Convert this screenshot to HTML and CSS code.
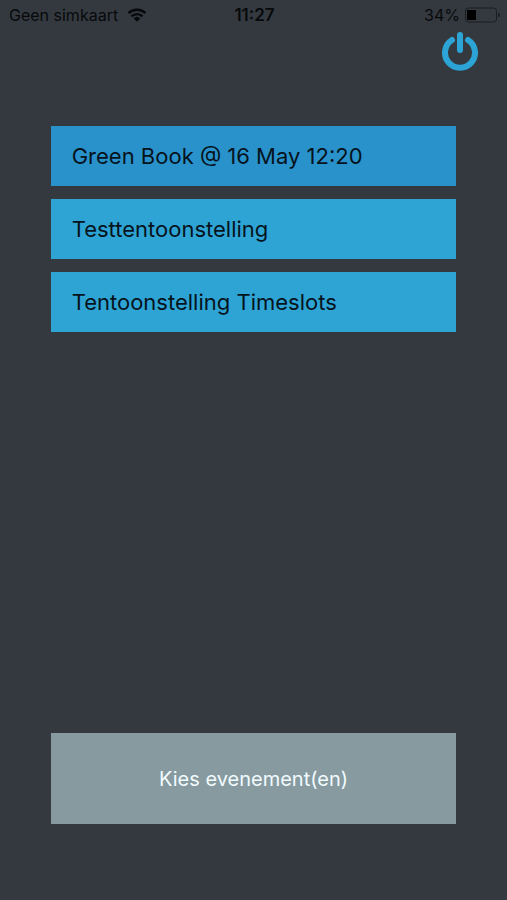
FILE: index.html
```
<!DOCTYPE html>
<html lang="nl">

<head>
  <meta charset="UTF-8">
  <meta name="viewport" content="width=device-width, initial-scale=1.0">
  <title>Kies evenement</title>
  <link rel="stylesheet" href="styles.css">
</head>

<body>
  <div class="screen">
    <div class="status_bar">
      <div class="carrier">
        <span>Geen simkaart</span>
        <svg class="wifi" viewBox="0 0 20 14" aria-hidden="true">
          <path d="M1.5 5.2a12.3 12.3 0 0 1 17 0M4.5 8.3a8 8 0 0 1 11 0" fill="none" stroke="currentColor" stroke-width="2.4" />
          <path d="M6.7 10.4a4.8 4.8 0 0 1 6.6 0L10 13.8z" fill="currentColor" />
        </svg>
      </div>
      <div class="time">11:27</div>
      <div class="battery">
        <span>34%</span>
        <svg class="battery_icon" viewBox="0 0 36 16" aria-hidden="true">
          <rect x="1.5" y="1" width="31" height="14" rx="3" fill="none" stroke="#1a1e21" />
          <rect x="3" y="3" width="9" height="10" fill="#000" />
          <path d="M34 5.5v5q2-1 2-2.500t-2-2.500z" fill="#1a1e21" />
        </svg>
      </div>
    </div>

    <header class="header">
      <button class="power" type="button" aria-label="Uitloggen">
        <svg viewBox="0 0 36 42" aria-hidden="true">
          <path d="M10 10a15 15 0 1 0 16 0M18 5v15" />
        </svg>
      </button>
    </header>

    <main class="events">
      <button class="event selected" type="button" aria-pressed="true">Green Book @ 16 May 12:20</button>
      <button class="event" type="button" aria-pressed="false">Testtentoonstelling</button>
      <button class="event" type="button" aria-pressed="false">Tentoonstelling Timeslots</button>
    </main>

    <footer class="footer">
      <button class="choose" type="button">Kies evenement(en)</button>
    </footer>
  </div>
  <script>
    const events = document.querySelectorAll(".event");

    events.forEach(el => {
      el.addEventListener("click", () => {
        const selected = el.classList.toggle("selected");
        el.setAttribute("aria-pressed", selected);
      })
    })
  </script>
</body>

</html>
```
FILE: styles.css
```
* {
  margin: 0;
  padding: 0;
  box-sizing: border-box;
}

body {
  background: #34393f;
  font-family: Inter, "Liberation Sans", sans-serif;
}

button {
  border: none;
  font-family: inherit;
  cursor: pointer;
}

svg {
  display: block;
}

.screen {
  display: flex;
  flex-direction: column;
  min-height: 100vh;
}

.status_bar {
  display: grid;
  grid-template-columns: 1fr auto 1fr;
  align-items: center;
  height: 30px;
  padding: 0 7px 0 9px;
  color: #07090b;
  font-size: 16px;
}

.carrier,
.battery {
  display: flex;
  align-items: center;
}

.carrier {
  gap: 9px;
}

.wifi {
  width: 20px;
  height: 14px;
}

.time {
  font-size: 17px;
  font-weight: 600;
}

.battery {
  justify-content: flex-end;
  gap: 4px;
}

.battery_icon {
  width: 36px;
  height: 16px;
}

.header {
  display: flex;
  justify-content: flex-end;
  padding: 0 29px;
}

.power {
  width: 36px;
  height: 42px;
  background: none;
}

.power path {
  fill: none;
  stroke: #2da4d6;
  stroke-width: 6;
  stroke-linecap: round;
}

.events {
  display: flex;
  flex: 1;
  flex-direction: column;
  gap: 13px;
  padding: 54px 10% 0;
}

.event {
  height: 60px;
  padding: 0 21px;
  background: #2da4d4;
  color: #06131c;
  font-size: 22px;
  text-align: left;
}

.event.selected {
  background: #2992cb;
}

.footer {
  padding: 24px 10% 76px;
}

.choose {
  width: 100%;
  height: 91px;
  background: #869aa0;
  color: #f2fbfe;
  font-size: 20px;
}
```
